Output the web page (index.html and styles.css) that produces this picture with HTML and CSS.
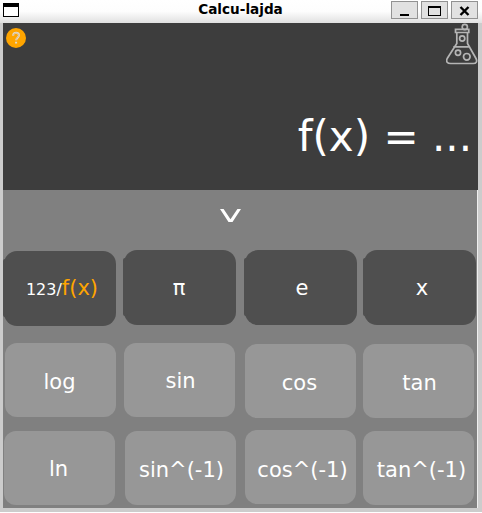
FILE: index.html
```html
<!DOCTYPE html>
<html lang="en">
<head>
<meta charset="utf-8">
<title>Calcu-lajda</title>
<link rel="stylesheet" href="styles.css">
</head>
<body>
<div class="window">
  <header class="titlebar">
    <svg class="app-icon" width="16" height="14" viewBox="0 0 16 14" shape-rendering="crispEdges"><rect width="16" height="14" fill="#000"/><rect x="1" y="4" width="14" height="9" fill="#fff"/></svg>
    <h1 class="title">Calcu-lajda</h1>
    <div class="controls">
      <button class="control" aria-label="Minimize"><svg width="25" height="16" shape-rendering="crispEdges"><rect x="8" y="12" width="9" height="2"/></svg></button>
      <button class="control" aria-label="Maximize"><svg width="25" height="16" shape-rendering="crispEdges"><path d="M6 4h13v10H6zM7 6v7h11V6z" fill-rule="evenodd"/></svg></button>
      <button class="control" aria-label="Close"><svg width="25" height="16"><path d="M8.5 5l8 8M16.5 5l-8 8" stroke="#000" stroke-width="2.4"/></svg></button>
    </div>
  </header>
  <main class="client">
    <section class="display">
      <div class="tools">
        <button class="help" aria-label="Help"><svg width="20" height="20" viewBox="0 0 20 20" fill="none"><path d="M7.2 7.8V7.2C7.2 3.8 13 3.9 13 7.3C13 9.7 10.1 9.7 10.1 12.3M10.1 13.8v1.7" stroke="#dedbd4" stroke-width="2"/><path d="M7.4 7.5C7.3 4.2 12.8 4.3 12.8 7.3C12.8 9.5 10.1 9.7 10.1 12" stroke="#ef9d22" stroke-width=".4"/></svg></button>
        <svg class="flask" width="33" height="42" viewBox="0 0 33 42" fill="none" stroke="#b5b5b5" stroke-width="1.7">
          <circle cx="18.8" cy="4" r="2.6"/>
          <path d="M9.5 9.5V6.3h13.3v3.2zM10.8 10v10.5L1.2 35.5c-1.5 3.2.2 5 3.5 5h22.500c3.300 0 4.200-2.300 2.800-5L21.500 20.500V10M7.300 23.800h16.500"/>
          <circle cx="16.2" cy="15.5" r="2.6"/><circle cx="12" cy="29.8" r="2.6"/><circle cx="20.8" cy="33.8" r="3.3"/>
        </svg>
      </div>
      <output class="expression">f(x) = ...</output>
    </section>
    <section class="keypad">
      <button class="expand" aria-label="Show more"><svg width="22" height="16" viewBox="0 0 22 16"><path d="M0 1h3.6L10.5 11.3 17.4 1H21L12.5 14h-4z" fill="#fff"/></svg></button>
      <div class="keys">
        <button class="key dark low mode"><span class="digits">123/</span><span class="function">f(x)</span></button>
        <button class="key dark pi"><span>π</span></button>
        <button class="key dark euler"><span>e</span></button>
        <button class="key dark variable"><span>x</span></button>
        <button class="key log"><span>log</span></button>
        <button class="key sin"><span>sin</span></button>
        <button class="key low cos"><span>cos</span></button>
        <button class="key low tan"><span>tan</span></button>
        <button class="key low ln"><span>ln</span></button>
        <button class="key low asin"><span>sin^(-1)</span></button>
        <button class="key acos"><span>cos^(-1)</span></button>
        <button class="key low atan"><span>tan^(-1)</span></button>
      </div>
    </section>
  </main>
</div>
</body>
</html>
```

FILE: styles.css
```css
* { box-sizing: border-box; }
body { margin: 0; background: #fff; font-family: "DejaVu Sans", sans-serif; overflow: hidden; }
button { padding: 0; border: 0; font: inherit; color: inherit; }
svg { display: block; }
.window { width: 482px; height: 512px; background: #ccc; }
.titlebar { display: grid; grid-template-columns: 98px 1fr 98px; height: 23px; padding: 0 1px 0 3px; background: linear-gradient(#fff 0, #fdfdfd 50%, #e0e0e0 100%); }
.app-icon { margin-top: 3px; }
.title { margin: 1px 3px 0 0; font-size: 13.6px; line-height: 17px; font-weight: bold; text-align: center; color: #000; }
.controls { display: flex; gap: 3px; padding-top: 1px; margin-left: 8px; }
.control { width: 27px; height: 18px; border: 1px solid #929292; background: #e1e1e1; flex: none; }
.control svg { margin-top: -1px; }
.client { margin: 0 4px 0 3px; color: #fff; }
.display { height: 167px; background: #3d3d3d; overflow: hidden; }
.tools { display: flex; justify-content: space-between; height: 89px; padding-left: 3px; }
.help { width: 20px; height: 20px; margin-top: 5px; border-radius: 50%; background: #ffa500; }
.flask { margin-right: -1px; }
.expression { display: block; height: 50px; padding-right: 6px; font-size: 42px; line-height: 50px; text-align: right; white-space: nowrap; }
.keypad { height: 318px; background: #808080; border-right: 1px solid #eee; }
.expand { display: flex; align-items: flex-start; width: 22px; height: 60px; padding-top: 18px; margin-left: 217px; background: none; }
.keys { display: grid; grid-template-columns: 120px 121px 119px 114px; grid-template-rows: 93px 87px 78px; }
.key { position: relative; display: flex; align-items: center; justify-content: center; width: 111px; height: 74px; border-radius: 12px; background: #979797; font-size: 21px; line-height: 26px; white-space: nowrap; }
.low { margin-top: 1px; }
.dark { width: 112px; height: 75px; margin-left: 1px; border-radius: 13px; background: #4f4f4f; }
.dark::before { content: ""; position: absolute; left: -1px; top: 8px; width: 5px; height: 58px; border-radius: 2px; background: #4f4f4f; }
.key span { position: relative; top: 1px; }
.mode { align-items: baseline; padding-top: 23px; }
.digits { font-size: 16px; }
.function { color: #ffa500; }
.log { margin-left: 2px; }
.sin { margin-left: 1px; }
.cos, .acos { margin-left: 1px; }
.ln { margin-left: 1px; }
.asin { margin-left: 2px; }
.mode span { left: 2px; }
.key.pi span, .key.euler span { top: 0; }
.pi span { left: -1px; }
.euler span { left: 1px; }
.key.variable span { left: 2px; top: 0; }
.key.log span { left: -1px; top: 2px; }
.sin span { left: 1px; }
.cos span { left: -1px; }
.tan span { left: 1px; }
.ln span { left: -1px; }
.asin span { left: 1px; }
.key.acos span { left: 2px; top: 3px; }
.key.atan span { left: 3px; top: 2px; }
.key.asin span { top: 2px; }
.key.cos span, .key.tan span { top: 2px; }
```
